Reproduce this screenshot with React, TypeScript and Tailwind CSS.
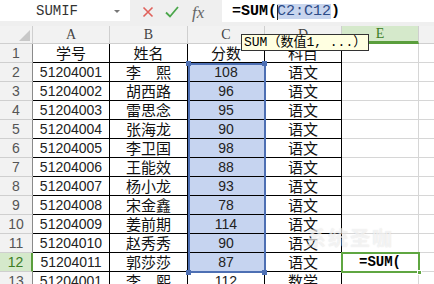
import React from "react";

const rows: string[][] = [
  ["学号", "姓名", "分数", "科目"],
  ["51204001", "李　熙", "108", "语文"],
  ["51204002", "胡西路", "96", "语文"],
  ["51204003", "雷思念", "95", "语文"],
  ["51204004", "张海龙", "90", "语文"],
  ["51204005", "李卫国", "98", "语文"],
  ["51204006", "王能效", "88", "语文"],
  ["51204007", "杨小龙", "93", "语文"],
  ["51204008", "宋金鑫", "78", "语文"],
  ["51204009", "姜前期", "114", "语文"],
  ["51204010", "赵秀秀", "90", "语文"],
  ["51204011", "郭莎莎", "87", "语文"],
  ["51204001", "李　熙", "112", "数学"],
];

const isCJK = (s: string) => /[\u3000-\u9fff]/.test(s);

export default function App() {
  return (
    <div
      className="relative w-[434px] h-[284px] overflow-hidden bg-white"
      style={{ fontFamily: "'Liberation Sans','Noto Sans CJK SC',sans-serif" }}
    >
      {/* toolbar */}
      <div className="flex h-[26px] bg-[#efefef]">
        <div className="relative flex h-[21px] w-[130px] items-center bg-white">
          <span className="ml-[36px] font-['Liberation_Mono'] text-[14px] text-[#333] leading-none">SUMIF</span>
          <div className="absolute left-[114px] top-[10px] h-0 w-0 border-x-[3px] border-t-[3px] border-x-transparent border-t-[#777]" />
        </div>
        <div className="flex w-[92px] items-start pt-[4px]">
          <svg width="12" height="12" viewBox="0 0 12 12" className="ml-[12px] mt-[2px]">
            <path d="M1.5 1.5 L10.5 10.5 M10.5 1.5 L1.5 10.5" stroke="#e0605a" strokeWidth="1.6" />
          </svg>
          <svg width="14" height="12" viewBox="0 0 14 12" className="ml-[11px] mt-[2px]">
            <path d="M1 6.5 L5 10.5 L13 1" stroke="#4aa64a" strokeWidth="1.8" fill="none" />
          </svg>
          <span className="ml-[13px] font-['Liberation_Serif'] italic text-[17px] leading-none text-[#666]">fx</span>
        </div>
        <div className="flex h-[22px] flex-1 items-center bg-white pl-[10px] font-['Liberation_Mono','Noto_Sans_CJK_SC',monospace] text-[15px] leading-none">
          <span className="font-bold text-black">=SUM(</span>
          <span className="relative bg-[#c8d5ee] text-[#2c4a86]">
            <span className="absolute left-0 top-[1px] h-[15px] w-px bg-[#222]" />
            C2:C12
          </span>
          <span className="font-bold text-black">)</span>
        </div>
      </div>

      {/* grid */}
      <div className="grid grid-cols-[33px_77px_78px_77px_77px_77px_1fr]">
        {/* column header corner */}
        <div className="flex h-[18px] items-end justify-end border-r border-b border-[#cfcfcf] bg-[#f2f2f2] pr-[2px] pb-[2px]">
          <svg width="11" height="11" viewBox="0 0 11 11">
            <polygon points="11,0 11,11 0,11" fill="#c8c8c8" />
          </svg>
        </div>
        {["A", "B", "C", "D"].map((c) => (
          <div
            key={c}
            className="flex h-[18px] items-center justify-center border-r border-b border-[#cfcfcf] bg-[#f2f2f2] font-['Liberation_Serif'] text-[14px] leading-none text-[#444]"
          >
            {c}
          </div>
        ))}
        <div className="flex h-[18px] items-center justify-center border-r border-[#cfcfcf] border-b-[3px] border-b-[#5a9e3c] bg-[#d5e9cb] font-['Liberation_Serif'] text-[14px] leading-none text-[#3c7d24]">
          E
        </div>
        <div className="h-[18px] border-b border-[#cfcfcf] bg-[#f2f2f2]" />

        {rows.map((r, i) => {
          const n = i + 1;
          const active = n === 12;
          const sel = n >= 2 && n <= 12;
          return (
            <React.Fragment key={n}>
              <div
                className={
                  active
                    ? "flex h-[19px] items-center justify-center border-b border-[#cfcfcf] border-r-2 border-r-[#5a9e3c] bg-[#d5e9cb] text-[14px] leading-none text-[#3c7d24]"
                    : "flex h-[19px] items-center justify-center border-b border-[#cfcfcf] border-r border-r-[#8a8a8a] bg-[#f2f2f2] text-[14px] leading-none text-[#555]"
                }
              >
                {n}
              </div>
              {r.map((v, j) => (
                <div
                  key={j}
                  className={
                    (j === 2 && sel ? "bg-[#c6d4f0] " : "bg-white ") +
                    (isCJK(v)
                      ? "flex h-[19px] items-center justify-center border-r border-b border-black text-[15px] leading-none text-[#111] whitespace-pre"
                      : "flex h-[19px] items-center justify-center border-r border-b border-black text-[14px] leading-none text-[#222]")
                  }
                >
                  {v}
                </div>
              ))}
              <div className="flex h-[19px] items-center justify-center border-r border-b border-[#d6d6d6] bg-white">
                {active ? (
                  <span className="font-['Liberation_Mono'] text-[14px] font-bold leading-none text-black">=SUM(</span>
                ) : null}
              </div>
              <div className="h-[19px] border-b border-[#d6d6d6] bg-white" />
            </React.Fragment>
          );
        })}
      </div>

      {/* selection C2:C12 */}
      <div className="pointer-events-none absolute left-[188px] top-[63px] h-[210px] w-[78px] border-2 border-[#4d6fb3]" />
      <div className="absolute left-[186px] top-[61px] h-[5px] w-[5px] bg-[#4d6fb3]" />
      <div className="absolute left-[262px] top-[61px] h-[5px] w-[5px] bg-[#4d6fb3]" />
      <div className="absolute left-[186px] top-[270px] h-[5px] w-[5px] bg-[#4d6fb3]" />
      <div className="absolute left-[262px] top-[270px] h-[5px] w-[5px] bg-[#4d6fb3]" />

      {/* active cell E12 */}
      <div className="pointer-events-none absolute left-[341px] top-[252px] h-[21px] w-[79px] border-2 border-[#5fa641]" />
      <div className="absolute left-[417px] top-[270px] h-[5px] w-[5px] border border-white bg-[#5fa641]" />

      {/* watermark */}
      <div
        className="pointer-events-none absolute left-[306px] top-[229px] text-[20px] font-bold leading-none tracking-[2px] text-white/60"
        style={{ textShadow: "0 0 1px rgba(150,150,150,0.3)" }}
      >
        系统圣咖
      </div>

      {/* tooltip */}
      <div className="absolute left-[241px] top-[34px] flex h-[17px] items-center border border-[#333] bg-[#ffffe1] px-[2px] font-['Liberation_Mono','Noto_Sans_CJK_SC',monospace] text-[13px] leading-none text-black whitespace-pre">
        SUM（数值1, ...）
      </div>
    </div>
  );
}
